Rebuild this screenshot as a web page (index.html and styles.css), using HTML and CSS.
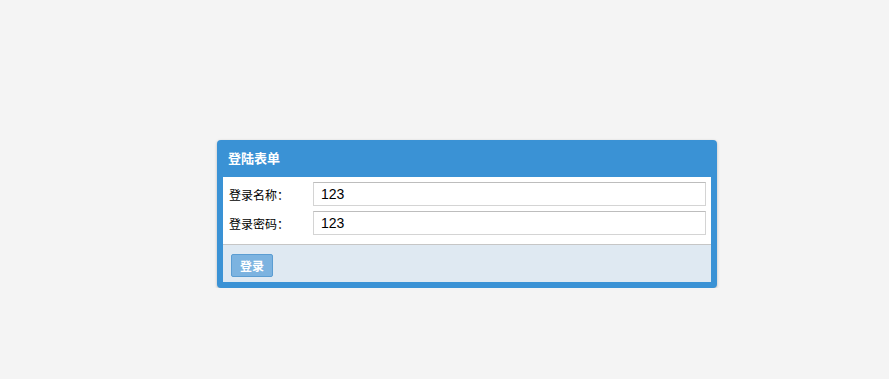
FILE: index.html
```html
<!DOCTYPE html>
<html lang="zh-CN">
<head>
  <meta charset="UTF-8" />
  <title>登陆</title>
  <link rel="stylesheet" href="styles.css">
</head>
<body>

  <div class="panel">
    <div class="panel-title">登陆表单</div>

    <form id="loginForm">
      <div class="fields">
        <div class="row">
          <label for="username">登录名称：</label>
          <input id="username" type="text" value="123" />
        </div>
        <div class="row">
          <label for="password">登录密码：</label>
          <input id="password" type="text" value="123" />
        </div>
      </div>
      <div class="actions">
        <button type="submit">登录</button>
      </div>
    </form>
  </div>

</body>
</html>
```

FILE: styles.css
```css
* {
  box-sizing: border-box;
  margin: 0;
  padding: 0;
}

body {
  font-family: "Noto Sans CJK SC", "Liberation Sans", sans-serif;
  background: #f4f4f4;
  color: #000;
  padding: 140px 0 0 217px;
}

.panel {
  width: 500px;
  background: #3a92d5;
  border-radius: 4px;
  padding: 0 6px 6px;
  box-shadow: 0 1px 3px rgba(0, 0, 0, 0.25);
}

.panel-title {
  height: 37px;
  line-height: 36px;
  padding-left: 5px;
  color: #fff;
  font-size: 13px;
  font-weight: bold;
}

.fields {
  background: #fff;
  padding: 5px 5px 9px 0;
  display: flex;
  flex-direction: column;
  gap: 5px;
}

.row {
  display: flex;
  align-items: center;
}

.row label {
  width: 90px;
  padding-left: 6px;
  font-size: 12px;
}

.row input {
  flex: 1;
  height: 24px;
  border: 1px solid #d4d4d4;
  border-top-color: #bdbdbd;
  padding: 0 7px;
  font-family: "Liberation Sans", sans-serif;
  font-size: 14px;
  color: #000;
  outline: none;
}

.actions {
  background: #dfe9f2;
  border-top: 1px solid #c6c6c6;
  height: 38px;
  padding: 7px 8px;
}

.actions button {
  width: 42px;
  height: 23px;
  background: #7cb3e0;
  border: 1px solid #5b9dd2;
  border-radius: 2px;
  color: #fff;
  font-family: "Noto Sans CJK SC", sans-serif;
  font-size: 12px;
  font-weight: bold;
  cursor: pointer;
}
```
